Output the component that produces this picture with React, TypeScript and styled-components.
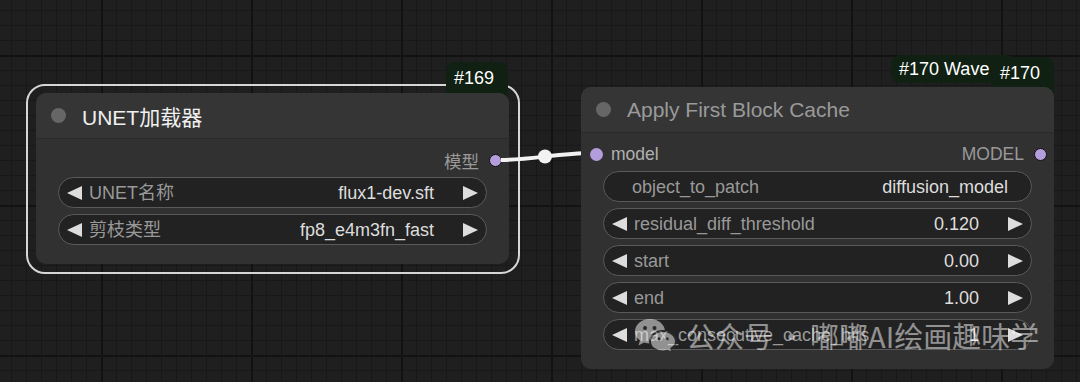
import React from "react";
import styled, { createGlobalStyle, css } from "styled-components";

const GlobalStyle = createGlobalStyle`
  html, body {
    margin: 0;
    padding: 0;
    background: #1f1f20;
  }
  * {
    box-sizing: border-box;
  }
`;

type WidgetData = {
  label: string;
  value: string;
  arrows?: boolean;
};

const unetWidgets: WidgetData[] = [
  { label: "UNET名称", value: "flux1-dev.sft", arrows: true },
  { label: "剪枝类型", value: "fp8_e4m3fn_fast", arrows: true },
];

const cacheWidgets: WidgetData[] = [
  { label: "object_to_patch", value: "diffusion_model" },
  { label: "residual_diff_threshold", value: "0.120", arrows: true },
  { label: "start", value: "0.00", arrows: true },
  { label: "end", value: "1.00", arrows: true },
  { label: "max_consecutive_cache_hits", value: "1", arrows: true },
];

const App = () => {
  return (
    <Canvas>
      <GlobalStyle />

      <Node $left={36} $top={93} $selected>
        <Badge $left={410} $top={-31} $width={62} $height={44} $line={33}>
          #169
        </Badge>
        <Title $bright>
          <TitleDot />
          UNET加载器
        </Title>
        <SlotRow>
          <span />
          <Slot>
            <SlotLabel>模型</SlotLabel>
            <SlotDot $ring />
          </Slot>
        </SlotRow>
        <Widgets>
          {unetWidgets.map((w) => (
            <Widget key={w.label} {...w} />
          ))}
        </Widgets>
      </Node>

      <LinkLayer width="1080" height="382" viewBox="0 0 1080 382">
        <path d="M 501 160 C 530 160, 560 153, 592 153" stroke="#f2f2f2" strokeWidth="4" fill="none" />
        <circle cx="545" cy="156.5" r="7" fill="#f2f2f2" />
      </LinkLayer>

      <Node $left={581} $top={87}>
        <Badge $left={310} $top={-32} $width={125} $height={28} $line={29}>
          #170 Wave
        </Badge>
        <Badge $right={0} $top={-30} $width={62} $height={44} $line={33}>
          #170
        </Badge>
        <Title>
          <TitleDot />
          Apply First Block Cache
        </Title>
        <SlotRow>
          <Slot $input>
            <SlotDot />
            <SlotLabel $light>model</SlotLabel>
          </Slot>
          <Slot>
            <SlotLabel>MODEL</SlotLabel>
            <SlotDot $ring />
          </Slot>
        </SlotRow>
        <Widgets>
          {cacheWidgets.map((w) => (
            <Widget key={w.label} {...w} />
          ))}
        </Widgets>
      </Node>

      <Watermark>
        <svg width="44" height="36" viewBox="0 0 44 36">
          <g fill="#ffffff">
            <path d="M16 2 C7 2 1 8 1 14.5 C1 18.5 3 21.5 6 23.5 L4.5 28.5 L10 25.5 C12 26.2 14 26.5 16 26.5 C25 26.5 31 20.5 31 14.5 C31 8 25 2 16 2 Z" />
            <path
              d="M29 14 C21.5 14 16 19 16 24.5 C16 30 21.5 34.5 29 34.5 C30.6 34.5 32 34.3 33.4 33.8 L38.5 36 L37.3 31.6 C40.2 29.7 42 27.3 42 24.5 C42 19 36.5 14 29 14 Z"
              stroke="#303030"
              strokeWidth="2"
            />
          </g>
          <g fill="#303030">
            <circle cx="11" cy="11" r="2" />
            <circle cx="20.5" cy="11" r="2" />
            <circle cx="25" cy="22" r="1.7" />
            <circle cx="33" cy="22" r="1.7" />
          </g>
        </svg>
        <WatermarkText>
          公众号<Dot>·</Dot>嘟嘟AI绘画趣味学
        </WatermarkText>
      </Watermark>
    </Canvas>
  );
};

const Widget = ({ label, value, arrows }: WidgetData) => (
  <WidgetBox $arrows={arrows}>
    {arrows && <Arrow $dir="left" />}
    <WidgetLabel>{label}</WidgetLabel>
    <WidgetValue $arrows={arrows}>{value}</WidgetValue>
    {arrows && <Arrow $dir="right" />}
  </WidgetBox>
);

export default App;

const Canvas = styled.div`
  position: relative;
  isolation: isolate;
  width: 1080px;
  height: 382px;
  overflow: hidden;
  font-family: "Liberation Sans", "Noto Sans CJK SC", sans-serif;
  background-color: #1f1f20;
  background-image: linear-gradient(to right, #121213 2px, transparent 2px),
    linear-gradient(to bottom, #121213 2px, transparent 2px),
    linear-gradient(to right, #18181a 1px, transparent 1px),
    linear-gradient(to bottom, #18181a 1px, transparent 1px);
  background-size: 150px 150px, 150px 150px, 15px 15px, 15px 15px;
  background-position: 101px 0, 0 55px, 11px 0, 0 10px;
`;

interface NodeProps {
  $left: number;
  $top: number;
  $selected?: boolean;
}

const Node = styled.div<NodeProps>`
  position: absolute;
  left: ${({ $left }) => $left}px;
  top: ${({ $top }) => $top}px;
  width: 473px;
  background: #313131;
  border-radius: 10px;

  ${({ $selected }) =>
    $selected &&
    css`
      &::before {
        content: "";
        position: absolute;
        inset: -9px -11px -10px -10px;
        border: 2px solid #d6d6d6;
        border-radius: 19px;
        z-index: -2;
      }
    `}
`;

interface BadgeProps {
  $left?: number;
  $right?: number;
  $top: number;
  $width: number;
  $height: number;
  $line: number;
}

const Badge = styled.div<BadgeProps>`
  position: absolute;
  z-index: -1;
  ${({ $left }) => ($left !== undefined ? `left: ${$left}px;` : "")}
  ${({ $right }) => ($right !== undefined ? `right: ${$right}px;` : "")}
  top: ${({ $top }) => $top}px;
  width: ${({ $width }) => $width}px;
  height: ${({ $height }) => $height}px;
  line-height: ${({ $line }) => $line}px;
  padding: 0 8px;
  background: #102012;
  border-radius: 9px;
  color: #ffffff;
  font-size: 18px;
  white-space: nowrap;
`;

const Title = styled.div<{ $bright?: boolean }>`
  display: flex;
  align-items: center;
  gap: 16px;
  height: 46px;
  padding-left: 15px;
  background: #353535;
  border-radius: 10px 10px 0 0;
  border-bottom: 1px solid #2a2a2a;
  font-size: 21px;
  color: ${({ $bright }) => ($bright ? "#f0f0f0" : "#9a9a9a")};
`;

const TitleDot = styled.span`
  width: 15px;
  height: 15px;
  border-radius: 50%;
  background: #666666;
`;

const SlotRow = styled.div`
  display: flex;
  align-items: center;
  justify-content: space-between;
  height: 34px;
  margin-top: 4px;
`;

const Slot = styled.div<{ $input?: boolean }>`
  display: flex;
  align-items: center;
  gap: ${({ $input }) => ($input ? "8px" : "10px")};
  padding: ${({ $input }) => ($input ? "0 0 0 9px" : "0 7px 0 0")};
`;

const SlotLabel = styled.span<{ $light?: boolean }>`
  font-size: 17.5px;
  color: ${({ $light }) => ($light ? "#b0b0b0" : "#999999")};
`;

const SlotDot = styled.span<{ $ring?: boolean }>`
  width: 13px;
  height: 13px;
  border-radius: 50%;
  background: #b39ddb;
  border: ${({ $ring }) => ($ring ? "1.5px solid #111" : "none")};
`;

const Widgets = styled.div`
  display: flex;
  flex-direction: column;
  gap: 6px;
  padding: 0 22px 19px;
`;

const WidgetBox = styled.div<{ $arrows?: boolean }>`
  display: flex;
  align-items: center;
  height: 31px;
  padding: ${({ $arrows }) => ($arrows ? "0 8px" : "0 23px 0 21px")};
  background: #222222;
  border: 1.5px solid #5a5a5a;
  border-radius: 16px;
  font-size: 18px;
  line-height: 1;
  white-space: nowrap;
`;

const Arrow = styled.span<{ $dir: "left" | "right" }>`
  width: 0;
  height: 0;
  border-top: 7px solid transparent;
  border-bottom: 7px solid transparent;
  ${({ $dir }) =>
    $dir === "left" ? "border-right: 15px solid #dddddd;" : "border-left: 15px solid #dddddd;"}
`;

const WidgetLabel = styled.span`
  flex: 1;
  margin-left: 7px;
  color: #999999;
`;

const WidgetValue = styled.span<{ $arrows?: boolean }>`
  color: #dddddd;
  margin-right: ${({ $arrows }) => ($arrows ? "29px" : "0")};
`;

const LinkLayer = styled.svg`
  position: absolute;
  left: 0;
  top: 0;
  pointer-events: none;
`;

const Watermark = styled.div`
  position: absolute;
  left: 634px;
  top: 317px;
  display: flex;
  align-items: center;
  gap: 8px;
  opacity: 0.5;
`;

const WatermarkText = styled.span`
  font-family: "Noto Sans CJK SC", sans-serif;
  font-size: 29px;
  line-height: 36px;
  color: #ffffff;
  white-space: nowrap;
`;

const Dot = styled.span`
  display: inline-block;
  margin: 0 4px;
`;
